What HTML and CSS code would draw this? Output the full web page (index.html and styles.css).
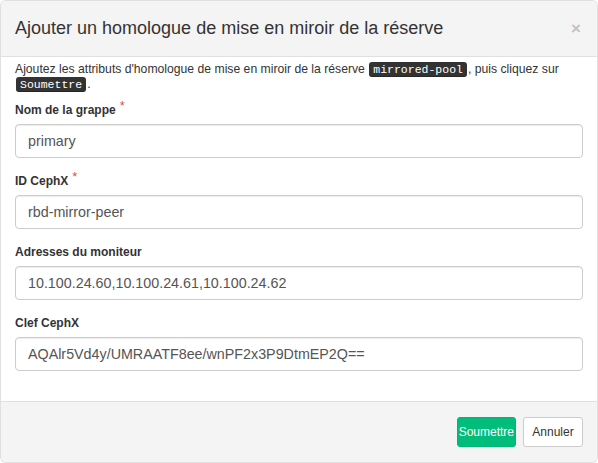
FILE: index.html
```html
<!DOCTYPE html>
<html lang="fr">
<head>
<meta charset="utf-8">
<title>Ajouter un homologue</title>
<link rel="stylesheet" href="styles.css">
</head>
<body>
<div class="modal">
  <div class="modal-header">
    <h4 class="modal-title">Ajouter un homologue de mise en miroir de la réserve</h4>
    <button class="close" type="button">×</button>
  </div>
  <div class="modal-body">
    <p class="intro">Ajoutez les attributs d'homologue de mise en miroir de la réserve <kbd>mirrored-pool</kbd>, puis cliquez sur <kbd>Soumettre</kbd>.</p>
    <div class="form-group">
      <label class="control-label">Nom de la grappe<span class="required">*</span></label>
      <input class="form-control" type="text" value="primary">
    </div>
    <div class="form-group">
      <label class="control-label">ID CephX<span class="required">*</span></label>
      <input class="form-control" type="text" value="rbd-mirror-peer">
    </div>
    <div class="form-group">
      <label class="control-label">Adresses du moniteur</label>
      <input class="form-control" type="text" value="10.100.24.60,10.100.24.61,10.100.24.62">
    </div>
    <div class="form-group">
      <label class="control-label">Clef CephX</label>
      <input class="form-control" type="text" value="AQAlr5Vd4y/UMRAATF8ee/wnPF2x3P9DtmEP2Q==">
    </div>
  </div>
  <div class="modal-footer">
    <button class="btn btn-submit" type="button">Soumettre</button>
    <button class="btn btn-default" type="button">Annuler</button>
  </div>
</div>
</body>
</html>
```
FILE: styles.css
```css
* { box-sizing: border-box; }
html, body { margin: 0; padding: 0; background: #fff; }
body {
  font-family: "Liberation Sans", Arial, sans-serif;
  font-size: 12px;
  line-height: 1.42857;
  color: #333;
}
.modal {
  width: 598px;
  height: 463px;
  display: flex;
  flex-direction: column;
  border: 1px solid rgba(0,0,0,0.12);
  border-radius: 6px;
  overflow: hidden;
  background: #fff;
}
.modal-header {
  display: flex;
  align-items: center;
  justify-content: space-between;
  padding: 15px 14px 15px 14px;
  height: 56px;
  background: #f4f4f4;
  border-bottom: 1px solid #e0e0e0;
}
.modal-title {
  margin: 0;
  font-size: 18px;
  font-weight: normal;
  line-height: 25px;
  color: #333;
}
.close {
  border: 0;
  background: transparent;
  padding: 0;
  margin-right: 2px;
  margin-top: -1px;
  font-family: "Liberation Sans", Arial, sans-serif;
  font-size: 17px;
  font-weight: bold;
  line-height: 1;
  color: #000;
  opacity: 0.2;
  cursor: pointer;
}
.modal-body {
  flex: 1;
  padding: 5px 14px 0 14px;
}
.intro {
  margin: 0 0 10px 0;
  font-size: 12.2px;
  line-height: 15px;
}
kbd {
  display: inline-block;
  padding: 0 4px;
  margin: 0 1px;
  font-family: "Liberation Mono", "Courier New", monospace;
  font-size: 11.5px;
  line-height: 15px;
  vertical-align: top;
  color: #fff;
  background: #333;
  border-radius: 3px;
  box-shadow: inset 0 -1px 0 rgba(0,0,0,0.25);
}
.form-group {
  display: flex;
  flex-direction: column;
  margin-bottom: 15px;
}
.control-label {
  font-weight: bold;
  font-size: 12px;
  line-height: 17px;
  height: 17px;
  margin-bottom: 5px;
  color: #333;
}
.required {
  color: #d9534f;
  font-weight: normal;
  font-size: 13px;
  line-height: 0;
  position: relative;
  top: -4px;
  margin-left: 4px;
}
.form-control {
  height: 34px;
  padding: 6px 12px;
  font-family: "Liberation Sans", Arial, sans-serif;
  font-size: 14.3px;
  color: #555;
  border: 1px solid #ccc;
  border-radius: 4px;
  background: #fff;
  box-shadow: inset 0 1px 1px rgba(0,0,0,0.075);
  width: 100%;
}
.modal-footer {
  display: flex;
  justify-content: flex-end;
  gap: 7px;
  padding: 15px 14px 15px 14px;
  background: #f4f4f4;
  border-top: 1px solid #e0e0e0;
}
.btn {
  height: 30px;
  min-width: 59px;
  padding: 0 1px;
  font-family: "Liberation Sans", Arial, sans-serif;
  font-size: 12px;
  border-radius: 3px;
  border: 1px solid transparent;
  cursor: pointer;
}
.btn-submit {
  background: #00bd7c;
  color: #fff;
  border-color: #00b575;
}
.btn-default {
  min-width: 60px;
  background: #fff;
  color: #333;
  border-color: #ccc;
}
```
